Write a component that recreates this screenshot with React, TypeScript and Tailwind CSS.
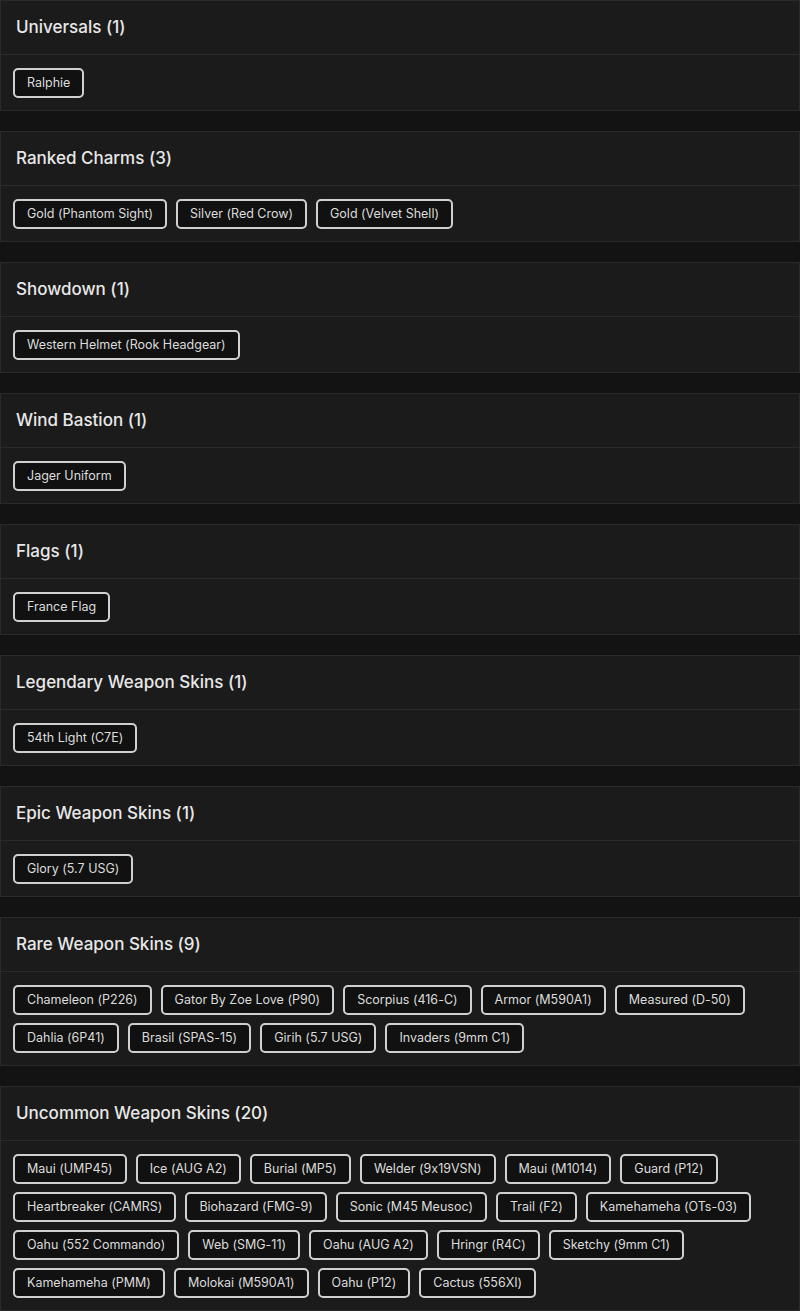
const sections: { title: string; items: string[] }[] = [
  { title: "Universals", items: ["Ralphie"] },
  {
    title: "Ranked Charms",
    items: ["Gold (Phantom Sight)", "Silver (Red Crow)", "Gold (Velvet Shell)"],
  },
  { title: "Showdown", items: ["Western Helmet (Rook Headgear)"] },
  { title: "Wind Bastion", items: ["Jager Uniform"] },
  { title: "Flags", items: ["France Flag"] },
  { title: "Legendary Weapon Skins", items: ["54th Light (C7E)"] },
  { title: "Epic Weapon Skins", items: ["Glory (5.7 USG)"] },
  {
    title: "Rare Weapon Skins",
    items: [
      "Chameleon (P226)",
      "Gator By Zoe Love (P90)",
      "Scorpius (416-C)",
      "Armor (M590A1)",
      "Measured (D-50)",
      "Dahlia (6P41)",
      "Brasil (SPAS-15)",
      "Girih (5.7 USG)",
      "Invaders (9mm C1)",
    ],
  },
  {
    title: "Uncommon Weapon Skins",
    items: [
      "Maui (UMP45)",
      "Ice (AUG A2)",
      "Burial (MP5)",
      "Welder (9x19VSN)",
      "Maui (M1014)",
      "Guard (P12)",
      "Heartbreaker (CAMRS)",
      "Biohazard (FMG-9)",
      "Sonic (M45 Meusoc)",
      "Trail (F2)",
      "Kamehameha (OTs-03)",
      "Oahu (552 Commando)",
      "Web (SMG-11)",
      "Oahu (AUG A2)",
      "Hringr (R4C)",
      "Sketchy (9mm C1)",
      "Kamehameha (PMM)",
      "Molokai (M590A1)",
      "Oahu (P12)",
      "Cactus (556XI)",
    ],
  },
];

function Section({ title, items }: { title: string; items: string[] }) {
  return (
    <div className="mb-5 border border-[#2a2a2a] bg-[#1b1b1b]">
      <div className="border-b border-[#2a2a2a] px-[15px] py-4">
        <h2 className="text-[17px] leading-[21px] font-medium text-[#e8e8e8]">
          {title} ({items.length})
        </h2>
      </div>
      <div className="flex flex-wrap gap-x-[9px] gap-y-2 px-3 pt-[13px] pb-3">
        {items.map((item, i) => (
          <span
            key={i}
            className="h-[30px] flex items-center rounded-[5px] border-2 border-[#d0d0d0] bg-[#111111] px-3 text-[12.5px] text-[#dcdcdc]"
          >
            {item}
          </span>
        ))}
      </div>
    </div>
  );
}

export default function App() {
  return (
    <div
      className="min-h-[1311px] w-[800px] bg-[#131313]"
      style={{ fontFamily: "Inter, 'Open Sans', sans-serif", fontFeatureSettings: '"calt" 0' }}
    >
      {sections.map((s) => (
        <Section key={s.title} title={s.title} items={s.items} />
      ))}
    </div>
  );
}
